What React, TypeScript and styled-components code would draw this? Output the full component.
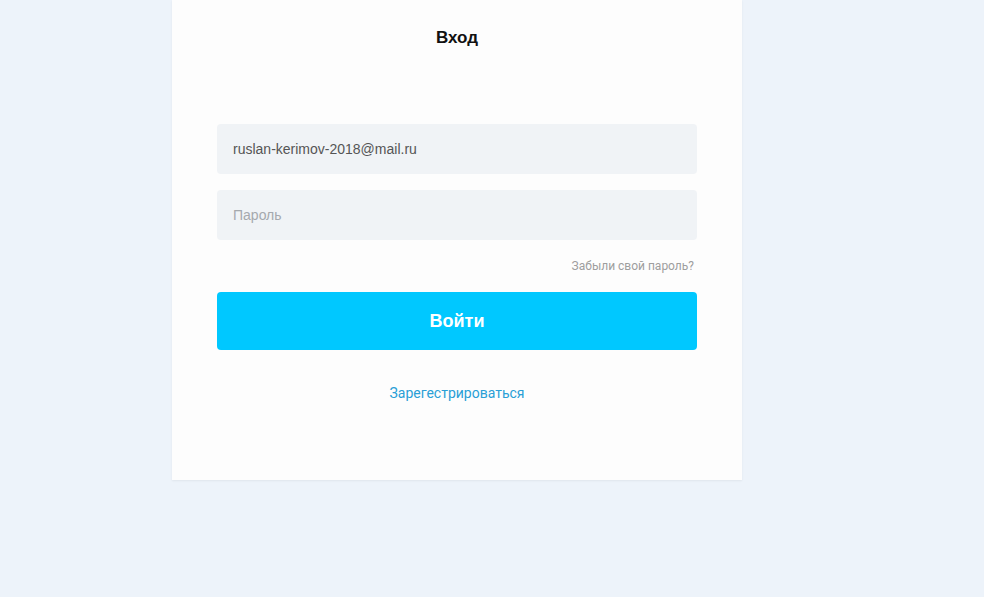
import styled, { createGlobalStyle } from 'styled-components'

const GlobalStyle = createGlobalStyle`
  html, body {
    margin: 0;
    padding: 0;
    background: #edf3fa;
    font-family: 'Liberation Sans', Arial, sans-serif;
  }
`

const App = () => {
  return (
    <>
      <GlobalStyle />
      <Page>
        <Card>
          <Title>Вход</Title>
          <Form onSubmit={(e) => e.preventDefault()}>
            <Input type="email" defaultValue="ruslan-kerimov-2018@mail.ru" />
            <Input type="password" placeholder="Пароль" />
            <ForgotRow>
              <ForgotLink href="#">Забыли свой пароль?</ForgotLink>
            </ForgotRow>
            <SubmitButton type="submit">Войти</SubmitButton>
          </Form>
          <RegisterLink href="#">Зарегестрироваться</RegisterLink>
        </Card>
      </Page>
    </>
  )
}

const Page = styled.div`
  display: flex;
  padding-left: 172px;
  min-height: 597px;
  box-sizing: border-box;
`

const Card = styled.div`
  width: 570px;
  height: 480px;
  box-sizing: border-box;
  background: #fdfdfd;
  box-shadow: 0 1px 2px rgba(0, 0, 0, 0.06);
  padding: 28px 45px 0;
  display: flex;
  flex-direction: column;
  align-items: center;
`

const Title = styled.h1`
  margin: 0;
  font-size: 17px;
  line-height: 20px;
  font-weight: 700;
  color: #111;
`

const Form = styled.form`
  width: 100%;
  margin-top: 76px;
  display: flex;
  flex-direction: column;
  gap: 16px;
`

const Input = styled.input`
  width: 100%;
  height: 50px;
  box-sizing: border-box;
  border: none;
  border-radius: 4px;
  background: #f0f3f6;
  padding: 0 16px;
  font-family: 'Liberation Sans', Arial, sans-serif;
  font-size: 14px;
  color: #555;
  outline: none;

  &::placeholder {
    color: #a5a9ae;
  }
`

const ForgotRow = styled.div`
  display: flex;
  justify-content: flex-end;
  padding-right: 3px;
  margin-top: 3px;
`

const ForgotLink = styled.a`
  font-family: Roboto, sans-serif;
  font-size: 12px;
  line-height: 14px;
  color: #9e9e9e;
  text-decoration: none;
`

const SubmitButton = styled.button`
  height: 58px;
  margin-top: 3px;
  border: none;
  border-radius: 4px;
  background: #00c8ff;
  color: #fff;
  font-family: 'Liberation Sans', Arial, sans-serif;
  font-size: 18px;
  font-weight: 700;
  cursor: pointer;
`

const RegisterLink = styled.a`
  margin-top: 35px;
  font-family: Roboto, sans-serif;
  font-size: 14px;
  line-height: 16px;
  color: #2a9fd6;
  text-decoration: none;
`

export default App
